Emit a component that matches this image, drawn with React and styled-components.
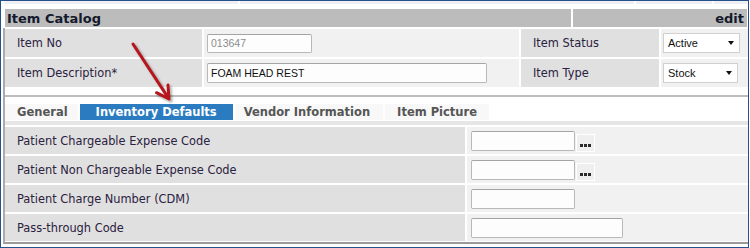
import React from 'react'
import styled, { createGlobalStyle } from 'styled-components'

const Global = createGlobalStyle`
    body {
        margin: 0;
        background: #fff;
    }
`

const Frame = styled.div`
    position: relative;
    width: 749px;
    height: 248px;
    box-sizing: border-box;
    border: 1px solid #25508a;
    background: #fff;
    font-family: "DejaVu Sans", Verdana, sans-serif;
`

const TopStrip = styled.div`
    display: flex;
    gap: 2px;
    height: 3px;
    margin-left: 3px;
`

const StripCell = styled.div`
    width: ${({ $w }) => $w}px;
    background: #eef0f3;
`

const Header = styled.div`
    display: grid;
    grid-template-columns: 566px 1fr;
    gap: 2px;
    height: 18px;
    margin: 5px 1px 0 4px;
`

const HeaderCell = styled.div`
    display: flex;
    align-items: center;
    justify-content: ${({ $right }) => ($right ? 'flex-end' : 'flex-start')};
    padding: 0 3px 0 2px;
    background: #bcbcbc;
    font-size: 13px;
    font-weight: 700;
    color: #141a2c;
`

const Panel = styled.div`
    margin: 1px 0 0 2px;
    padding: 1px 0 1px 0;
    border-left: 2px solid #ababab;
    border-bottom: 2px solid #9a9a9a;
`

const TopGrid = styled.div`
    display: grid;
    grid-template-columns: 197px 315px 138px 1fr;
    grid-auto-rows: 28px;
    gap: 2px;
`

const BottomGrid = styled.div`
    display: grid;
    grid-template-columns: 460px 1fr;
    grid-auto-rows: 27px;
    gap: 2px;
`

const Label = styled.div`
    display: flex;
    align-items: center;
    padding-left: 12px;
    background: #e0e0e0;
    font-size: 11.4px;
    color: #2b2140;
    white-space: nowrap;
`

const Value = styled.div`
    display: flex;
    align-items: center;
    padding-left: ${({ $pad }) => $pad ?? 3}px;
    background: #f1f1f1;
`

const TextInput = styled.input`
    box-sizing: border-box;
    width: ${({ $w }) => $w}px;
    height: ${({ $h }) => $h ?? 20}px;
    margin: 0;
    padding: 0 3px;
    border: 1px solid #b8b8b8;
    border-top-color: #a4a4a4;
    border-radius: 2px;
    background: #fdfdfd;
    font-family: "Liberation Sans", Arial, sans-serif;
    font-size: 10.5px;
    color: ${({ $muted }) => ($muted ? '#8c8c8c' : '#111')};
    outline: none;
`

const SelectBox = styled.div`
    box-sizing: border-box;
    display: flex;
    align-items: center;
    justify-content: space-between;
    width: ${({ $w }) => $w}px;
    height: 20px;
    padding: 0 5px 0 4px;
    border: 1px solid #d0d0d0;
    background: #fff;
    font-family: "Liberation Sans", Arial, sans-serif;
    font-size: 11px;
    color: #111;
`

const Caret = styled.span`
    width: 0;
    height: 0;
    border-left: 3.5px solid transparent;
    border-right: 3.5px solid transparent;
    border-top: 4px solid #111;
`

const LookupButton = styled.button`
    box-sizing: border-box;
    display: flex;
    align-items: flex-end;
    justify-content: center;
    gap: 1px;
    width: 19px;
    height: 18px;
    margin: 4px 0 0 1px;
    padding: 0 0 4px 0;
    border: 1px solid #fff;
    background: #efefef;
    cursor: pointer;
`

const Dot = styled.span`
    width: 3px;
    height: 3px;
    background: #2a2a2a;
`

const Divider = styled.div`
    height: 2px;
    margin-top: 8px;
    background: #bdbdbd;
`

const TabBar = styled.div`
    display: flex;
    align-items: flex-end;
    gap: 2px;
    height: 24px;
    box-sizing: border-box;
    padding-bottom: 1px;
`

const Tab = styled.div`
    display: flex;
    align-items: center;
    height: 16px;
    padding: 0 ${({ $r }) => $r}px 0 ${({ $l }) => $l}px;
    background: ${({ $active }) => ($active ? '#2a7bc0' : '#f8f8f8')};
    color: ${({ $active }) => ($active ? '#fff' : '#555')};
    font-size: 11.5px;
    font-weight: 700;
    white-space: nowrap;
    cursor: pointer;
`

const Band = styled.div`
    height: 4px;
    margin-bottom: 2px;
    background: #e6e6e6;
`

const Arrow = styled.svg`
    position: absolute;
    left: 124px;
    top: 37px;
    overflow: visible;
    pointer-events: none;
`

const lookupRows = [
    { label: 'Patient Chargeable Expense Code', w: 104, lookup: true },
    { label: 'Patient Non Chargeable Expense Code', w: 104, lookup: true },
    { label: 'Patient Charge Number (CDM)', w: 104 },
    { label: 'Pass-through Code', w: 152 },
]

const tabs = [
    { name: 'General', l: 12, r: 10 },
    { name: 'Inventory Defaults', l: 16, r: 16, active: true },
    { name: 'Vendor Information', l: 9, r: 13 },
    { name: 'Item Picture', l: 12, r: 12 },
]

const arrowPath = 'M8 6 L44 61 M43 47 L44 61 L31.5 54.7'

export default function App() {
    return (
        <>
            <Global />
            <Frame>
                <TopStrip>
                    {[234, 395, 76, 34].map((w, i) => (
                        <StripCell key={i} $w={w} />
                    ))}
                </TopStrip>
                <Header>
                    <HeaderCell>Item Catalog</HeaderCell>
                    <HeaderCell $right>edit</HeaderCell>
                </Header>
                <Panel>
                    <TopGrid>
                        <Label>Item No</Label>
                        <Value>
                            <TextInput $w={105} $h={19} $muted defaultValue="013647" readOnly />
                        </Value>
                        <Label>Item Status</Label>
                        <Value $pad={2}>
                            <SelectBox $w={77}>Active<Caret /></SelectBox>
                        </Value>
                        <Label>Item Description*</Label>
                        <Value>
                            <TextInput $w={280} defaultValue="FOAM HEAD REST" />
                        </Value>
                        <Label>Item Type</Label>
                        <Value $pad={2}>
                            <SelectBox $w={75}>Stock<Caret /></SelectBox>
                        </Value>
                    </TopGrid>
                    <Divider />
                    <TabBar>
                        {tabs.map((t) => (
                            <Tab key={t.name} $active={t.active} $l={t.l} $r={t.r}>{t.name}</Tab>
                        ))}
                    </TabBar>
                    <Band />
                    <BottomGrid>
                        {lookupRows.map((row) => (
                            <React.Fragment key={row.label}>
                                <Label>{row.label}</Label>
                                <Value $pad={4}>
                                    <TextInput $w={row.w} />
                                    {row.lookup && (
                                        <LookupButton>
                                            <Dot /><Dot /><Dot />
                                        </LookupButton>
                                    )}
                                </Value>
                            </React.Fragment>
                        ))}
                    </BottomGrid>
                </Panel>
                <Arrow width="56" height="70" viewBox="0 0 56 70">
                    <defs>
                        <filter id="arrowShadow" x="-30%" y="-30%" width="160%" height="160%">
                            <feGaussianBlur stdDeviation="1.2" />
                        </filter>
                    </defs>
                    <path d={arrowPath} transform="translate(2 2)" stroke="rgba(0,0,0,0.3)" strokeWidth="3.2"
                        fill="none" strokeLinecap="round" strokeLinejoin="round" filter="url(#arrowShadow)" />
                    <path d={arrowPath} stroke="#b8141c" strokeWidth="3" fill="none"
                        strokeLinecap="round" strokeLinejoin="round" />
                </Arrow>
            </Frame>
        </>
    )
}
